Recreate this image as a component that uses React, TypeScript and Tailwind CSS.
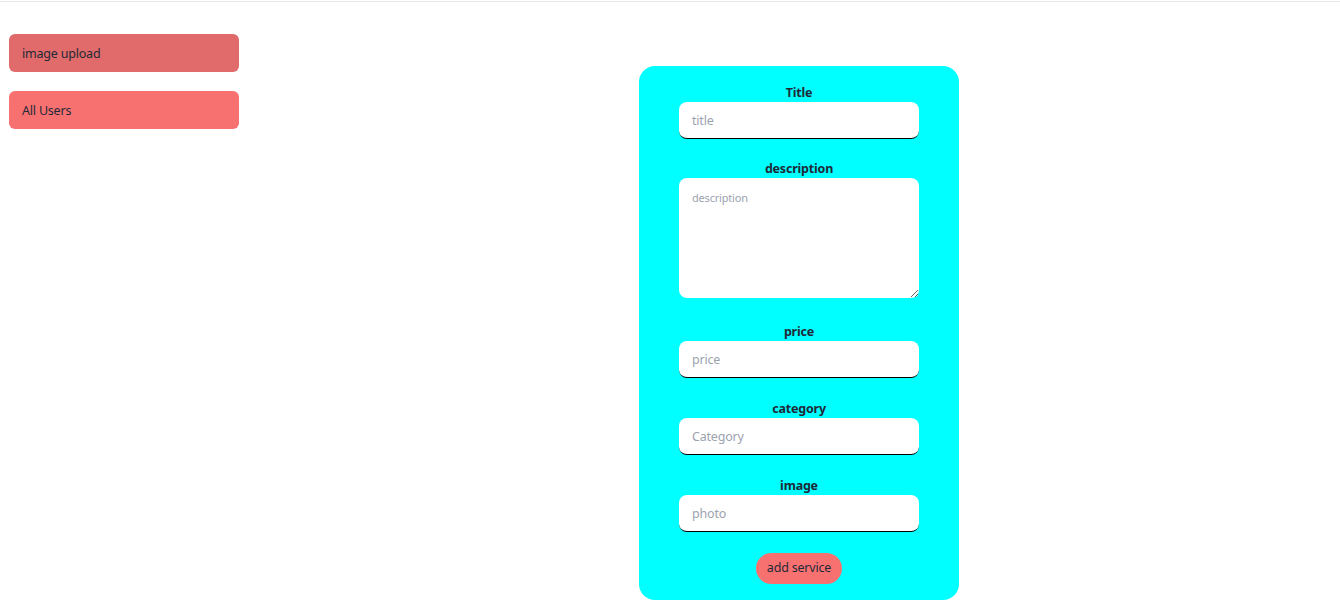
const inputCls =
    "w-[240px] h-[37px] bg-white rounded-lg border-b border-black px-[13px] pt-px text-[12.5px] tracking-[-0.2px] placeholder:text-[#9ca3af] outline-none"
const labelCls = "text-[12.5px] tracking-[-0.2px] font-bold leading-[18px] pt-[2px]"

export default function App() {
    return (
        <div className="min-h-screen bg-white text-[#1f2937]" style={{fontFamily: "'Noto Sans', sans-serif"}}>
            <div className="h-[2px] border-b border-[#e5e7eb]"/>
            <div className="flex">
                <aside className="w-[258px] shrink-0 pl-[9px] pt-[32px] flex flex-col gap-[19px]">
                    <button className="w-[230px] h-[38px] rounded-md bg-[#e16b6b] text-left pl-[13px] pt-[2px] text-[12.5px] tracking-[-0.2px] text-[#1f2937]">
                        image upload
                    </button>
                    <button className="w-[230px] h-[38px] rounded-md bg-[#f87171] text-left pl-[13px] pt-[3px] text-[12.5px] tracking-[-0.2px] text-[#1f2937]">
                        All Users
                    </button>
                </aside>
                <main className="flex-1 flex justify-center pt-[64px]">
                    <form className="w-[320px] h-[534px] bg-[#00ffff] rounded-2xl flex flex-col items-center pt-[16px]">
                        <label className={labelCls}>Title</label>
                        <input placeholder="title" className={inputCls}/>

                        <label className={labelCls + " mt-[19px]"}>description</label>
                        <textarea placeholder="description"
                                  className="w-[240px] h-[120px] bg-white rounded-lg px-[13px] pt-[12px] text-[11px] tracking-[-0.2px] placeholder:text-[#9ca3af] outline-none block"/>

                        <label className={labelCls + " mt-[23px]"}>price</label>
                        <input placeholder="price" className={inputCls}/>

                        <label className={labelCls + " mt-[20px]"}>category</label>
                        <input placeholder="Category" className={inputCls}/>

                        <label className={labelCls + " mt-[20px]"}>image</label>
                        <input placeholder="photo" className={inputCls}/>

                        <button type="button"
                                className="mt-[21px] h-[31px] px-[11px] rounded-full bg-[#f87171] text-[12.5px] tracking-[-0.2px] text-[#1f2937]">
                            add service
                        </button>
                    </form>
                </main>
            </div>
        </div>
    )
}
